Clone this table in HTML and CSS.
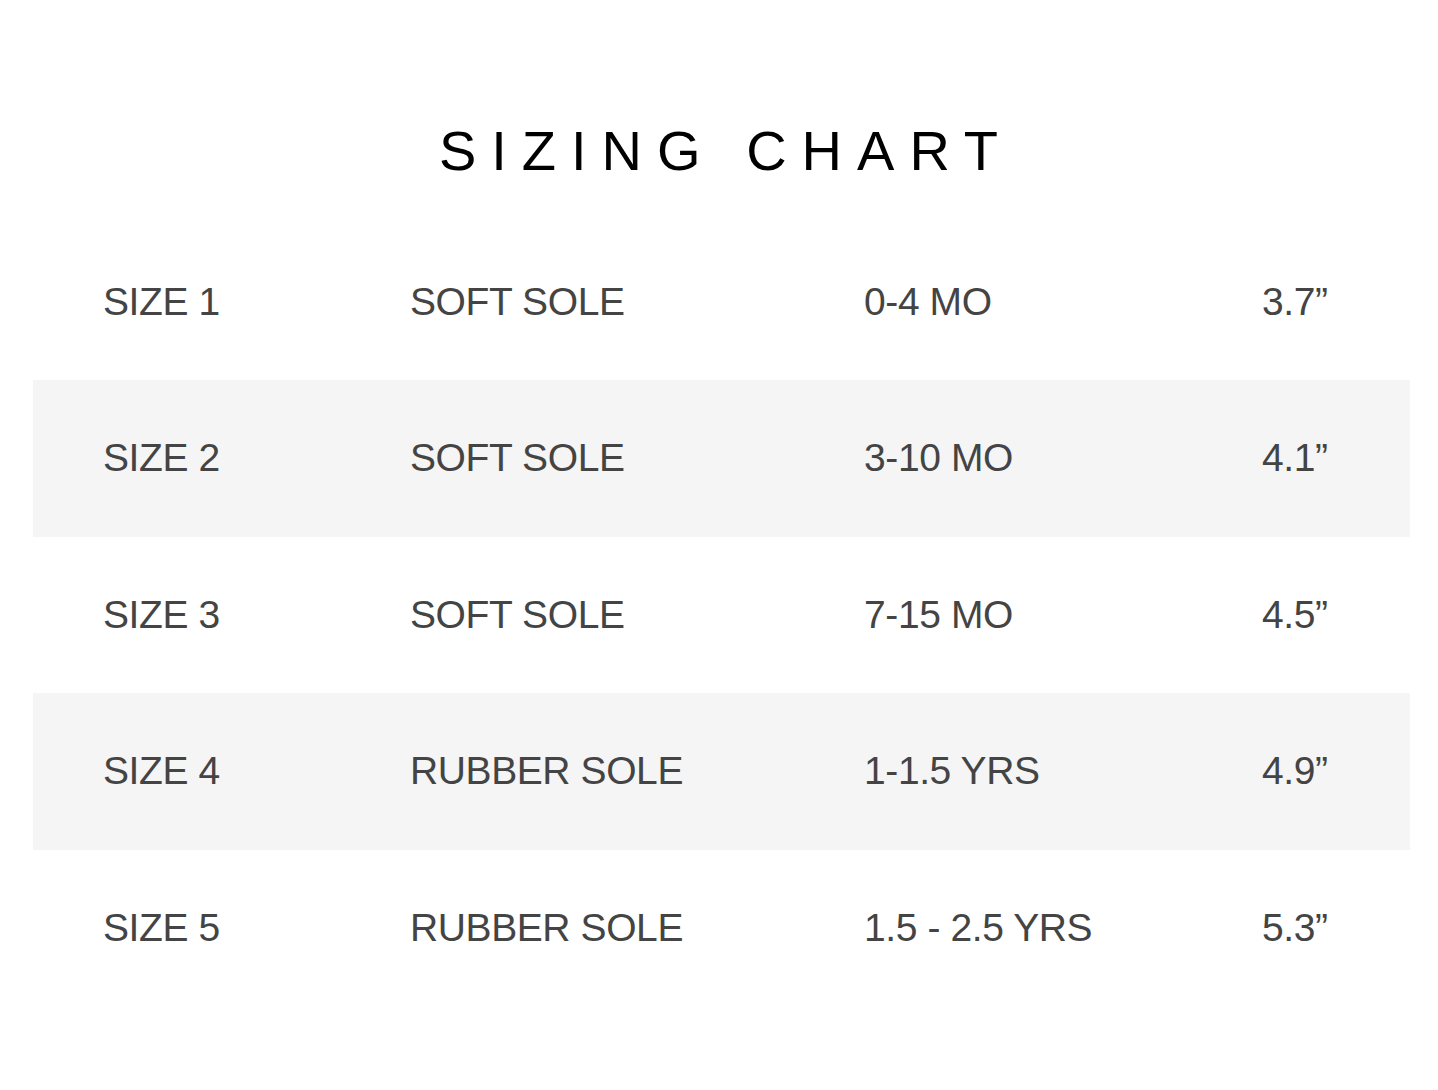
FILE: index.html
```html
<!DOCTYPE html>
<html>
<head>
<meta charset="utf-8">
<link rel="stylesheet" href="styles.css">
</head>
<body>
<div class="page">
  <h1 class="title">SIZING CHART</h1>
  <div class="chart">
    <div class="row"><div class="c1">SIZE 1</div><div class="c2">SOFT SOLE</div><div class="c3">0-4 MO</div><div class="c4">3.7”</div></div>
    <div class="row alt"><div class="c1">SIZE 2</div><div class="c2">SOFT SOLE</div><div class="c3">3-10 MO</div><div class="c4">4.1”</div></div>
    <div class="row"><div class="c1">SIZE 3</div><div class="c2">SOFT SOLE</div><div class="c3">7-15 MO</div><div class="c4">4.5”</div></div>
    <div class="row alt"><div class="c1">SIZE 4</div><div class="c2">RUBBER SOLE</div><div class="c3">1-1.5 YRS</div><div class="c4">4.9”</div></div>
    <div class="row"><div class="c1">SIZE 5</div><div class="c2">RUBBER SOLE</div><div class="c3">1.5 - 2.5 YRS</div><div class="c4">5.3”</div></div>
  </div>
</div>
</body>
</html>
```

FILE: styles.css
```css
html, body {
  margin: 0;
  padding: 0;
  background: #ffffff;
}
body {
  font-family: "Liberation Sans", Arial, Helvetica, sans-serif;
}
.page {
  padding: 0 28px 0 33px;
}
.title {
  margin: 0;
  padding: 123px 0 0 9px;
  height: 223.5px;
  box-sizing: border-box;
  text-align: center;
  font-weight: 400;
  font-size: 56px;
  line-height: 1;
  letter-spacing: 15px;
  color: #000;
}
.chart {
  display: flex;
  flex-direction: column;
}
.row {
  display: grid;
  grid-template-columns: 307px 454px 398px 1fr;
  align-items: center;
  height: 156.5px;
  padding-left: 70px;
  font-size: 39px;
  letter-spacing: -0.4px;
  color: #444444;
}
.row.alt {
  background: #f5f5f5;
}
```
